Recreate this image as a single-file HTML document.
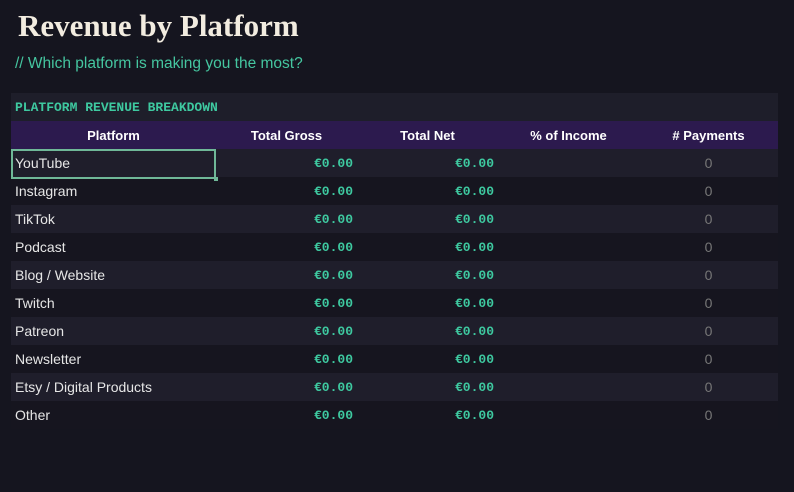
<!DOCTYPE html>
<html><head><style>
body{margin:0;background:#15151f;width:794px;height:492px;overflow:hidden;font-family:"Liberation Sans",sans-serif;}
h1{position:absolute;left:18px;top:8px;margin:0;font-family:"Liberation Serif",serif;font-weight:bold;font-size:31px;color:#f2ece0;}
.sub{position:absolute;left:15px;top:55px;font-size:15.5px;color:#45c6a0;}
.band{position:absolute;left:11px;top:93px;width:767px;height:28px;background:#1e1e2a;}
.band span{position:absolute;left:4px;top:7px;font-family:"Liberation Mono",monospace;font-weight:bold;font-size:13px;color:#3ec9a0;}
table{position:absolute;left:11px;top:121px;border-collapse:collapse;width:767px;table-layout:fixed;}
td,th{height:28px;padding:0;font-size:14px;}
th{background:#2c1a4e;color:#fff;font-size:13px;font-weight:bold;}
td{color:#e6e6e6;}
tr.o td{background:#1f1e2b;}
tr.e td{background:#16151f;}
td.p{padding-left:4px;}
td.m{text-align:right;padding-right:4px;font-family:"Liberation Mono",monospace;font-weight:bold;font-size:13px;color:#3ec9a0;}
td.n{text-align:center;color:#777;}
.sel{position:absolute;left:11px;top:149px;width:201px;height:26px;border:2px solid #6fb898;box-sizing:content-box;}
.sel:after{content:"";position:absolute;right:-4px;bottom:-4px;width:4px;height:4px;background:#6fb898;}
</style></head><body>
<h1>Revenue by Platform</h1>
<div class="sub">// Which platform is making you the most?</div>
<div class="band"><span>PLATFORM REVENUE BREAKDOWN</span></div>
<table>
<colgroup><col style="width:205px"><col style="width:141px"><col style="width:141px"><col style="width:141px"><col style="width:139px"></colgroup>
<tr><th>Platform</th><th>Total Gross</th><th>Total Net</th><th>% of Income</th><th># Payments</th></tr>
<tr class="o"><td class="p">YouTube</td><td class="m">€0.00</td><td class="m">€0.00</td><td></td><td class="n">0</td></tr>
<tr class="e"><td class="p">Instagram</td><td class="m">€0.00</td><td class="m">€0.00</td><td></td><td class="n">0</td></tr>
<tr class="o"><td class="p">TikTok</td><td class="m">€0.00</td><td class="m">€0.00</td><td></td><td class="n">0</td></tr>
<tr class="e"><td class="p">Podcast</td><td class="m">€0.00</td><td class="m">€0.00</td><td></td><td class="n">0</td></tr>
<tr class="o"><td class="p">Blog / Website</td><td class="m">€0.00</td><td class="m">€0.00</td><td></td><td class="n">0</td></tr>
<tr class="e"><td class="p">Twitch</td><td class="m">€0.00</td><td class="m">€0.00</td><td></td><td class="n">0</td></tr>
<tr class="o"><td class="p">Patreon</td><td class="m">€0.00</td><td class="m">€0.00</td><td></td><td class="n">0</td></tr>
<tr class="e"><td class="p">Newsletter</td><td class="m">€0.00</td><td class="m">€0.00</td><td></td><td class="n">0</td></tr>
<tr class="o"><td class="p">Etsy / Digital Products</td><td class="m">€0.00</td><td class="m">€0.00</td><td></td><td class="n">0</td></tr>
<tr class="e"><td class="p">Other</td><td class="m">€0.00</td><td class="m">€0.00</td><td></td><td class="n">0</td></tr>
</table>
<div class="sel"></div>
</body></html>
